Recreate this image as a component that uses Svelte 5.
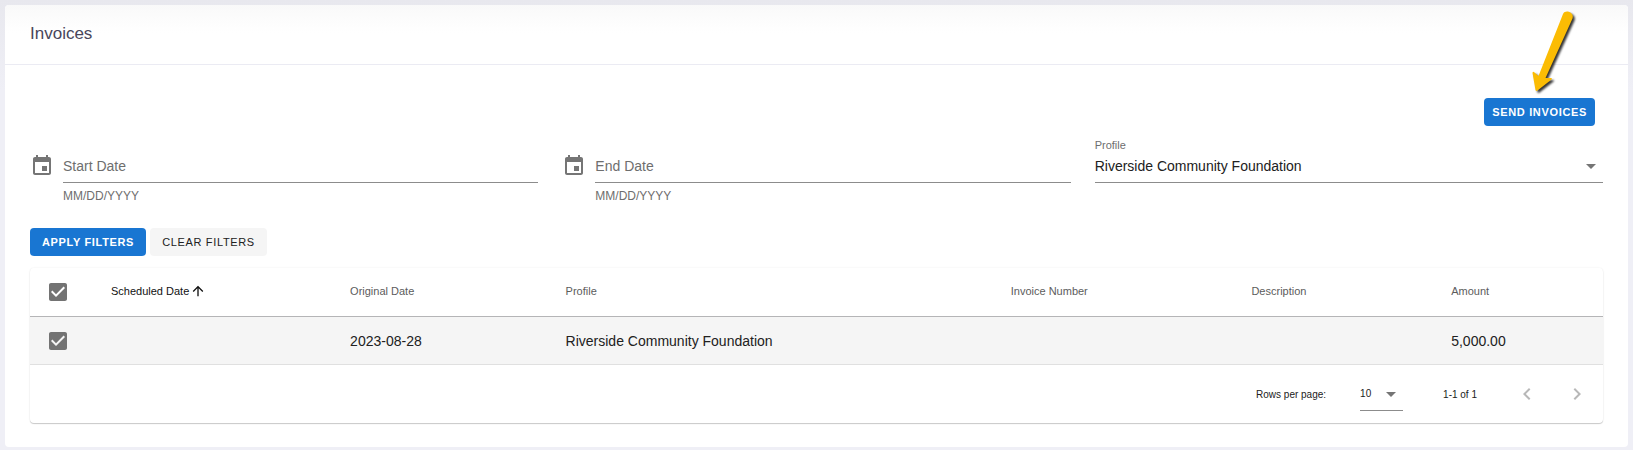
<script lang="ts">
  interface Invoice {
    id: number
    scheduled: string
    original: string
    profile: string
    number: string
    description: string
    amount: string
  }

  const columns = [
    { key: 'scheduled', label: 'Scheduled Date' },
    { key: 'original', label: 'Original Date' },
    { key: 'profile', label: 'Profile' },
    { key: 'number', label: 'Invoice Number' },
    { key: 'description', label: 'Description' },
    { key: 'amount', label: 'Amount' },
  ] as const

  const invoices: Invoice[] = [
    {
      id: 1,
      scheduled: '',
      original: '2023-08-28',
      profile: 'Riverside Community Foundation',
      number: '',
      description: '',
      amount: '5,000.00',
    },
  ]

  let dates = $state([
    { id: 'start-date', label: 'Start Date', value: '' },
    { id: 'end-date', label: 'End Date', value: '' },
  ])
  let profile = $state('Riverside Community Foundation')
  let perPage = $state('10')
  let selected = $state<number[]>([1])

  let allSelected = $derived(selected.length === invoices.length)

  function toggleAll(): void {
    selected = allSelected ? [] : invoices.map((i) => i.id)
  }

  function clearFilters(): void {
    for (const d of dates) d.value = ''
  }
</script>

{#snippet checkmark()}
  <svg class="check-icon" viewBox="0 0 24 24" aria-hidden="true">
    <path
      class="box-on"
      d="M10 17L5 12L6.41 10.58L10 14.17L17.59 6.58L19 8M19 3H5C3.89 3 3 3.89 3 5V19C3 20.1 3.9 21 5 21H19C20.1 21 21 20.1 21 19V5C21 3.89 20.1 3 19 3Z"
    />
    <path
      class="box-off"
      d="M19 3H5C3.89 3 3 3.89 3 5V19C3 20.1 3.9 21 5 21H19C20.1 21 21 20.1 21 19V5C21 3.89 20.1 3 19 3M19 5V19H5V5H19Z"
    />
  </svg>
{/snippet}

<main class="page">
  <section class="card">
    <header class="card-header">
      <h1>Invoices</h1>
    </header>

    <div class="card-body">
      <div class="send-row">
        <button type="button" class="btn primary compact">Send Invoices</button>
        <svg class="pointer" viewBox="0 0 48 90" aria-hidden="true">
          <path
            d="M38 3C40.500 -2 49.500 1.500 47.500 7.500L20.500 67L26 67Q27.500 67.500 26.500 68.500L12.500 79.500Q11 80.500 10.500 79L7.500 62Q7.800 60 9.500 61.500L13.500 65Z"
          />
        </svg>
      </div>

      <div class="filters">
        {#each dates as date (date.id)}
          <div class="date-field">
            <svg class="calendar" viewBox="0 0 24 24" aria-hidden="true">
              <path
                d="M19 19H5V8H19M16 1V3H8V1H6V3H5C3.89 3 3 3.89 3 5V19C3 20.1 3.9 21 5 21H19C20.1 21 21 20.1 21 19V5C21 3.89 20.1 3 19 3H18V1M17 12H12V17H17V12Z"
              />
            </svg>
            <div class="control">
              <div class="line">
                <input id={date.id} type="text" bind:value={date.value} />
                {#if !date.value}
                  <label class="placeholder" for={date.id}>{date.label}</label>
                {/if}
              </div>
              <div class="hint">MM/DD/YYYY</div>
            </div>
          </div>
        {/each}

        <div class="profile-field">
          <label for="profile">Profile</label>
          <div class="line">
            <select id="profile" bind:value={profile}>
              <option>Riverside Community Foundation</option>
            </select>
            <svg class="caret" viewBox="0 0 24 24" aria-hidden="true"><path d="M7 10L12 15L17 10H7Z" /></svg>
          </div>
        </div>
      </div>

      <div class="actions">
        <button type="button" class="btn primary">Apply Filters</button>
        <button type="button" class="btn" onclick={clearFilters}>Clear Filters</button>
      </div>

      <div class="table-card">
        <table>
          <colgroup>
            <col class="col-check" />
            {#each columns as col (col.key)}
              <col class="col-{col.key}" />
            {/each}
          </colgroup>
          <thead>
            <tr>
              <th class="check-cell">
                <label class="check">
                  <input type="checkbox" aria-label="Select all" checked={allSelected} onchange={toggleAll} />
                  {@render checkmark()}
                </label>
              </th>
              {#each columns as col (col.key)}
                <th class:sorted={col.key === 'scheduled'}>
                  <span class="heading">
                    {col.label}
                    {#if col.key === 'scheduled'}
                      <svg class="sort" viewBox="0 0 24 24" aria-hidden="true">
                        <path d="M13 20H11V8L5.500 13.500L4.080 12.080L12 4.160L19.920 12.080L18.500 13.500L13 8V20Z" />
                      </svg>
                    {/if}
                  </span>
                </th>
              {/each}
            </tr>
          </thead>
          <tbody>
            {#each invoices as invoice (invoice.id)}
              <tr class:selected={selected.includes(invoice.id)}>
                <td class="check-cell">
                  <label class="check">
                    <input type="checkbox" aria-label="Select invoice" value={invoice.id} bind:group={selected} />
                    {@render checkmark()}
                  </label>
                </td>
                {#each columns as col (col.key)}
                  <td>{invoice[col.key]}</td>
                {/each}
              </tr>
            {/each}
          </tbody>
        </table>

        <footer class="pagination">
          <label for="per-page">Rows per page:</label>
          <div class="line per-page">
            <select id="per-page" bind:value={perPage}>
              <option>5</option>
              <option>10</option>
              <option>25</option>
            </select>
            <svg class="caret" viewBox="0 0 24 24" aria-hidden="true"><path d="M7 10L12 15L17 10H7Z" /></svg>
          </div>
          <span class="range">1-1 of 1</span>
          <button type="button" class="nav" aria-label="Previous page" disabled>
            <svg viewBox="0 0 24 24"><path d="M15.410 16.580L10.830 12L15.410 7.410L14 6L8 12L14 18L15.410 16.580Z" /></svg>
          </button>
          <button type="button" class="nav" aria-label="Next page" disabled>
            <svg viewBox="0 0 24 24"><path d="M8.590 16.580L13.170 12L8.590 7.410L10 6L16 12L10 18L8.590 16.580Z" /></svg>
          </button>
        </footer>
      </div>
    </div>
  </section>
</main>

<style>
  :global(body) {
    background: #efeff6 linear-gradient(#e8e8ee, #efeff6) no-repeat top / 100% 90px;
    font-family: 'Liberation Sans', Arial, sans-serif;
    color: #212121;
  }

  .page {
    padding: 5px 5px 0;
  }

  .card {
    background: #fff;
    border-radius: 4px;
  }

  .card-header {
    display: flex;
    align-items: center;
    height: 60px;
    padding: 0 25px;
    box-sizing: border-box;
    padding-bottom: 2px;
    border-radius: 4px 4px 0 0;
    border-bottom: 1px solid #ebebf3;
    background: linear-gradient(#f9f9f9, #fff 28px);
  }

  h1 {
    margin: 0;
    font-size: 17px;
    font-weight: 400;
    color: #48465b;
  }

  .card-body {
    padding: 33px 25px 24px;
  }

  .send-row {
    position: relative;
    display: flex;
    justify-content: flex-end;
    padding-right: 8px;
    margin-bottom: 12px;
  }

  .pointer {
    position: absolute;
    right: 30px;
    bottom: 25px;
    width: 48px;
    height: 90px;
    fill: #fbbc04;
    overflow: visible;
    pointer-events: none;
    filter: drop-shadow(2px 2px 1px rgba(0, 0, 0, 0.8));
  }

  .btn {
    height: 28px;
    padding: 0 12px;
    border: 0;
    border-radius: 4px;
    background: #f5f5f5;
    color: #212121;
    font-family: inherit;
    font-size: 11px;
    letter-spacing: 0.06em;
    text-transform: uppercase;
    cursor: pointer;
  }

  .btn.primary {
    background: #1976d2;
    color: #fff;
    font-weight: 700;
  }

  .btn.compact {
    padding: 0 8px;
  }

  .filters {
    display: grid;
    grid-template-columns: repeat(3, minmax(0, 1fr));
    gap: 24px;
  }

  .date-field {
    display: flex;
    gap: 9px;
    padding-top: 16px;
  }

  .calendar {
    flex: none;
    width: 24px;
    height: 24px;
    fill: #757575;
  }

  .control {
    flex: 1;
    min-width: 0;
  }

  .line {
    position: relative;
    height: 28px;
    border-bottom: 1px solid #8c8c8c;
  }

  .line input,
  .line select {
    display: block;
    width: 100%;
    height: 24px;
    padding: 0;
    border: 0;
    outline: 0;
    background: transparent;
    color: inherit;
    font-family: inherit;
    font-size: 14px;
    appearance: none;
  }

  .placeholder {
    position: absolute;
    top: 0;
    left: 0;
    font-size: 14px;
    line-height: 24px;
    color: #6e6e6e;
  }

  .hint {
    margin-top: 5px;
    font-size: 12px;
    line-height: 16px;
    color: #6e6e6e;
  }

  .profile-field label {
    display: block;
    margin-bottom: 2px;
    font-size: 11px;
    line-height: 14px;
    color: #6e6e6e;
  }

  .caret {
    position: absolute;
    top: 0;
    right: 0;
    width: 24px;
    height: 24px;
    fill: #757575;
    pointer-events: none;
  }

  .actions {
    display: flex;
    gap: 4px;
    margin: 24px 0 12px;
  }

  .table-card {
    border-radius: 4px;
    box-shadow:
      0 1px 1px rgba(0, 0, 0, 0.2),
      0 0 2px rgba(0, 0, 0, 0.08);
  }

  table {
    width: 100%;
    table-layout: fixed;
    border-collapse: collapse;
  }

  .col-check {
    width: 57px;
  }
  .col-scheduled {
    width: 15.2%;
  }
  .col-original {
    width: 13.7%;
  }
  .col-profile {
    width: 28.3%;
  }
  .col-number {
    width: 15.3%;
  }
  .col-description {
    width: 12.7%;
  }

  th,
  td {
    height: 47px;
    padding: 0 24px;
    text-align: left;
    white-space: nowrap;
  }

  th {
    height: 48px;
    font-size: 11px;
    font-weight: 400;
    color: #5c5c5c;
    border-bottom: 1px solid #b5b5b7;
  }

  th.sorted {
    color: #111;
  }

  td {
    font-size: 14px;
    border-bottom: 1px solid #e0e0e0;
  }

  tr.selected {
    background: #f5f5f5;
  }

  .heading {
    display: flex;
    align-items: center;
    padding-bottom: 2px;
  }

  .sort {
    width: 16px;
    height: 16px;
    margin-left: 1px;
    fill: currentColor;
  }

  .check-cell {
    padding: 0 0 0 16px;
  }

  .check {
    position: relative;
    display: block;
    width: 24px;
    height: 24px;
  }

  .check input {
    position: absolute;
    inset: 0;
    width: 24px;
    height: 24px;
    margin: 0;
    opacity: 0;
    cursor: pointer;
  }

  .check-icon {
    display: block;
    width: 24px;
    height: 24px;
    fill: #737373;
  }

  .check input:checked ~ .check-icon .box-off,
  .check input:not(:checked) ~ .check-icon .box-on {
    display: none;
  }

  .pagination {
    display: flex;
    align-items: center;
    justify-content: flex-end;
    height: 58px;
    padding-right: 14px;
    font-size: 10px;
  }

  .per-page {
    width: 43px;
    margin: 4px 40px 0 34px;
  }

  .per-page select {
    font-size: 10px;
  }

  .range {
    margin-right: 38px;
  }

  .nav {
    width: 24px;
    height: 24px;
    padding: 0;
    border: 0;
    background: none;
  }

  .nav + .nav {
    margin-left: 26px;
  }

  .nav svg {
    display: block;
    width: 24px;
    height: 24px;
    fill: #b8b8b8;
  }
</style>
